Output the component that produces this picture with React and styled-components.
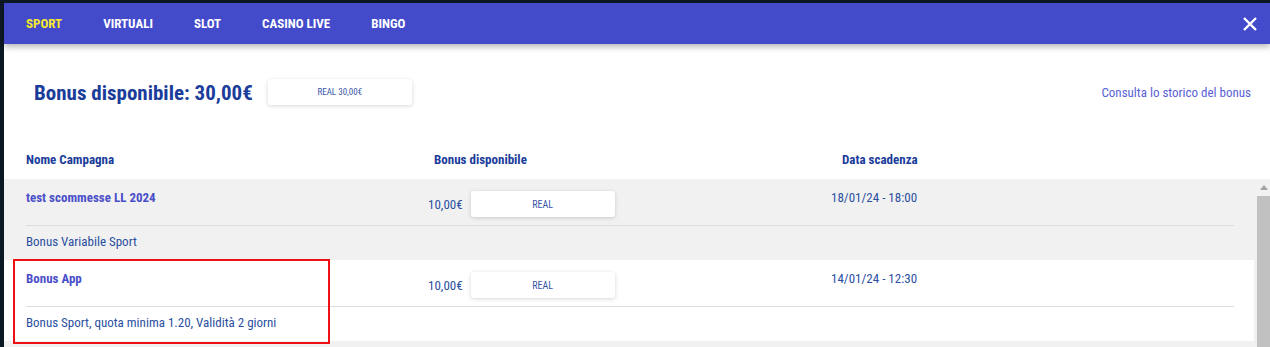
import React from 'react';
import styled, { createGlobalStyle } from 'styled-components';

const GlobalStyle = createGlobalStyle`
  html, body {
    margin: 0;
    padding: 0;
    overflow: hidden;
    background: #0c1824;
  }
  * {
    box-sizing: border-box;
  }
`;

const FONT = `"Liberation Sans Narrow", "Roboto Condensed", Roboto, sans-serif`;

const Page = styled.div`
  padding: 3px 0 0 4px;
  height: 347px;
  font-family: ${FONT};
`;

const Panel = styled.div`
  position: relative;
  background: #fff;
  display: flex;
  flex-direction: column;
`;

const NavBar = styled.nav`
  height: 41px;
  flex-shrink: 0;
  background: #444bca;
  display: flex;
  align-items: center;
  padding: 0 12px 0 22px;
  box-shadow: 0 3px 6px rgba(0, 0, 0, 0.28);
  position: relative;
  z-index: 1;
`;

const NavItem = styled.a`
  font-size: 13px;
  font-weight: 700;
  text-transform: uppercase;
  color: ${(p) => (p.$active ? '#f6ea2d' : '#ffffff')};
  margin-right: 41px;
  cursor: pointer;
`;

const Close = styled.button`
  margin-left: auto;
  background: none;
  border: 0;
  padding: 0;
  width: 16px;
  height: 16px;
  display: flex;
  cursor: pointer;
`;

const Summary = styled.div`
  display: flex;
  align-items: flex-start;
  flex-shrink: 0;
  padding: 34px 19px 0 30px;
  height: 95px;
`;

const Heading = styled.h2`
  margin: 0;
  font-size: 21px;
  font-weight: 700;
  color: #1a3c9a;
  line-height: 28px;
  margin-top: 1px;
`;

const ChipButton = styled.button`
  width: 144px;
  height: 26px;
  flex-shrink: 0;
  background: #fff;
  border: 0;
  border-radius: 3px;
  box-shadow: 0 1px 4px rgba(0, 0, 0, 0.16);
  font-family: ${FONT};
  font-size: ${(p) => p.$size}px;
  color: #3a56a6;
  text-transform: uppercase;
  cursor: pointer;
`;

const SummaryChip = styled(ChipButton)`
  margin: 1px 0 0 15px;
`;

const HistoryLink = styled.a`
  margin-left: auto;
  margin-top: 7px;
  font-size: 13px;
  color: #5a5fd6;
  cursor: pointer;
`;

const Columns = `
  display: grid;
  grid-template-columns: 402px 403px 1fr;
`;

const HeaderRow = styled.div`
  ${Columns}
  flex-shrink: 0;
  padding: 0 0 0 22px;
  height: 40px;
  align-items: center;
`;

const HeaderCell = styled.div`
  font-size: 13px;
  font-weight: 700;
  color: #1a3c9a;
  padding-left: ${(p) => p.$indent || 0}px;
`;

const Body = styled.div`
  height: 169px;
  flex-shrink: 0;
  overflow: hidden;
  display: flex;
  background: #f1f1f1;
`;

const RowList = styled.div`
  flex: 1;
  min-width: 0;
`;

const ScrollTrack = styled.div`
  width: 16px;
  flex-shrink: 0;
  display: flex;
  flex-direction: column;
  background: #f1f1f1;
`;

const ScrollArrow = styled.div`
  height: 17px;
  display: flex;
  align-items: center;
  justify-content: center;
  padding-left: 3px;
`;

const ScrollThumb = styled.div`
  flex: 1;
  margin-left: 3px;
  background: #c1c1c1;
`;

const Row = styled.div`
  background: ${(p) => (p.$shaded ? '#f1f1f1' : '#ffffff')};
  padding: 0 20px 0 22px;
`;

const RowTop = styled.div`
  ${Columns}
  height: 47px;
  padding-top: 12px;
  border-bottom: 1px solid #dddddd;
  align-items: start;
`;

const Title = styled.div`
  font-size: 13px;
  font-weight: 700;
  color: #4a4fc8;
  line-height: 14px;
`;

const Amount = styled.div`
  display: flex;
  align-items: center;
  font-size: 13px;
  color: #2a4fa0;
  gap: 8px;
`;

const DateText = styled.div`
  font-size: 13px;
  color: #2a4fa0;
  line-height: 14px;
`;

const Description = styled.div`
  height: 34px;
  padding-top: 8px;
  font-size: 13px;
  line-height: 15px;
  color: #2a4fa0;
`;

const Highlight = styled.div`
  position: absolute;
  left: 9px;
  top: 256px;
  width: 317px;
  height: 85px;
  border: 2px solid #ee1111;
  pointer-events: none;
  z-index: 2;
`;

const navItems = ['Sport', 'Virtuali', 'Slot', 'Casino Live', 'Bingo'];

const campaigns = [
  {
    title: 'test scommesse LL 2024',
    amount: '10,00€',
    date: '18/01/24 - 18:00',
    description: 'Bonus Variabile Sport',
  },
  {
    title: 'Bonus App',
    amount: '10,00€',
    date: '14/01/24 - 12:30',
    description: 'Bonus Sport, quota minima 1.20, Validità 2 giorni',
  },
];

const App = () => {
  return (
    <Page>
      <GlobalStyle />
      <Panel>
        <NavBar>
          {navItems.map((item, i) => (
            <NavItem key={item} $active={i === 0}>
              {item}
            </NavItem>
          ))}
          <Close aria-label="Chiudi">
            <svg width="16" height="16" viewBox="0 0 16 16">
              <path d="M2 2l12 12M14 2L2 14" stroke="#fff" strokeWidth="2.4" />
            </svg>
          </Close>
        </NavBar>

        <Summary>
          <Heading>Bonus disponibile: 30,00€</Heading>
          <SummaryChip $size={9}>Real 30,00€</SummaryChip>
          <HistoryLink>Consulta lo storico del bonus</HistoryLink>
        </Summary>

        <HeaderRow>
          <HeaderCell>Nome Campagna</HeaderCell>
          <HeaderCell $indent={6}>Bonus disponibile</HeaderCell>
          <HeaderCell $indent={11}>Data scadenza</HeaderCell>
        </HeaderRow>

        <Body>
          <RowList>
            {campaigns.map((c, i) => (
              <Row key={c.title} $shaded={i % 2 === 0}>
                <RowTop>
                  <Title>{c.title}</Title>
                  <Amount>
                    {c.amount}
                    <ChipButton $size={10}>Real</ChipButton>
                  </Amount>
                  <DateText>{c.date}</DateText>
                </RowTop>
                <Description>{c.description}</Description>
              </Row>
            ))}
          </RowList>
          <ScrollTrack>
            <ScrollArrow>
              <svg width="8" height="5" viewBox="0 0 8 5">
                <path d="M0 5h8L4 0z" fill="#a3a3a3" />
              </svg>
            </ScrollArrow>
            <ScrollThumb />
          </ScrollTrack>
        </Body>

        <Highlight />
      </Panel>
    </Page>
  );
};

export default App;
